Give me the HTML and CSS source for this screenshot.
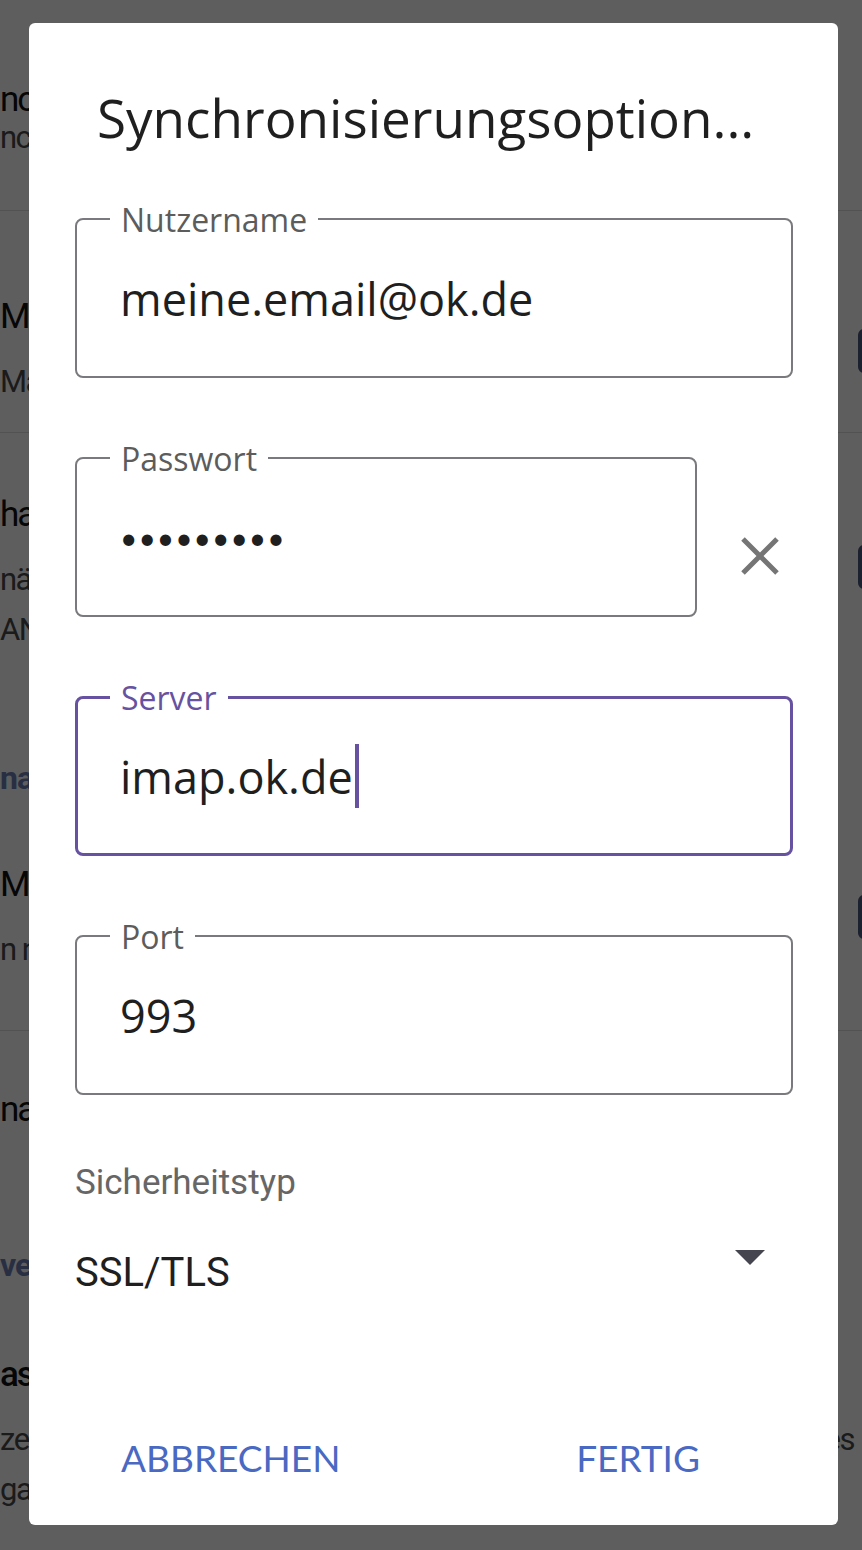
FILE: index.html
```html
<!DOCTYPE html>
<html lang="de">
<head>
	<meta charset="UTF-8">
	<title>Synchronisierungsoptionen</title>
	<link rel="stylesheet" href="styles.css">
</head>
<body>
	<div id="screen">
		<!-- settings page behind the dialog -->
		<div id="settings">
			<div class="item item-first">
				<div class="item-text">
					<div class="item-title">ncronisierung aktivieren</div>
					<div class="item-sub sub-tight">nchronisiert E-Mails</div>
				</div>
			</div>
			<div class="item item-second">
				<div class="item-text">
					<div class="item-title">Mails automatisch abrufen</div>
					<div class="item-sub">Mails im Hintergrund laden</div>
				</div>
				<div class="check"></div>
			</div>
			<div class="item item-third no-line">
				<div class="item-text">
					<div class="item-title">ha Anhänge laden</div>
					<div class="item-sub">nächste Synchronisation</div>
					<div class="item-sub">ANhänge nur über WLAN</div>
				</div>
				<div class="check"></div>
			</div>
			<div class="header header-first">nachrichten</div>
			<div class="item item-fourth">
				<div class="item-text">
					<div class="item-title">Mail benachrichtigen</div>
					<div class="item-sub">n neuen Nachrichten</div>
				</div>
				<div class="check"></div>
			</div>
			<div class="item item-fifth no-line">
				<div class="item-text">
					<div class="item-title">name des Kontos</div>
				</div>
			</div>
			<div class="header header-second">verwaltung</div>
			<div class="item item-sixth no-line">
				<div class="item-text">
					<div class="item-title title-bold">ast entfernen</div>
					<div class="item-sub sub-split"><span>ze</span><span>es</span></div>
					<div class="item-sub">ga</div>
				</div>
			</div>
		</div>
		<div id="scrim"></div>

		<div id="dialog">
			<div class="d-title">Synchronisierungsoption...</div>

			<div class="field">
				<span class="f-label">Nutzername</span>
				<span class="f-value">meine.email@ok.de</span>
			</div>

			<div class="field-row">
				<div class="field field-short">
					<span class="f-label">Passwort</span>
					<span class="f-value dots">&bull;&bull;&bull;&bull;&bull;&bull;&bull;&bull;&bull;</span>
				</div>
				<div class="clear-btn">
					<svg width="40" height="40" viewBox="0 0 40 40">
						<path d="M3 3 L37 37 M37 3 L3 37" stroke="#757575" stroke-width="5" fill="none"/>
					</svg>
				</div>
			</div>

			<div class="field focused">
				<span class="f-label">Server</span>
				<span class="f-value">imap.ok.de</span><span class="cursor"></span>
			</div>

			<div class="field">
				<span class="f-label">Port</span>
				<span class="f-value">993</span>
			</div>

			<div class="s-label">Sicherheitstyp</div>
			<div class="s-row">
				<span class="s-value">SSL/TLS</span>
				<svg class="s-arrow" width="30" height="15" viewBox="0 0 30 15">
					<path d="M0 0 L30 0 L15 15 Z" fill="#45454f"/>
				</svg>
			</div>

			<div class="d-buttons">
				<div class="d-btn">ABBRECHEN</div>
				<div class="d-btn">FERTIG</div>
			</div>
		</div>
	</div>
</body>
</html>
```

FILE: styles.css
```css
body {
	margin: 0;
	font-family: "Open Sans", "Roboto", sans-serif;
}
#screen {
	position: relative;
	width: 862px;
	height: 1550px;
	overflow: hidden;
	background-color: white;
}

/* background settings list */
#settings {
	font-family: "Roboto", sans-serif;
	color: #111;
}
.item {
	display: flex;
	justify-content: space-between;
	align-items: center;
	box-sizing: border-box;
	border-bottom: 1px solid #dddddd;
}
.no-line {
	border-bottom: none;
}
.item-text {
	flex: 1;
}
.item-title {
	font-size: 35px;
	line-height: 44px;
	letter-spacing: -2px;
	white-space: nowrap;
}
.title-bold {
	font-weight: 500;
}
.item-sub {
	font-size: 31px;
	line-height: 50px;
	letter-spacing: -1.5px;
	color: #4a4a4a;
	white-space: nowrap;
}
.item-title + .item-sub {
	margin-top: 18px;
}
.item-title + .sub-tight {
	margin-top: 0;
	line-height: 32px;
}
.sub-split {
	display: flex;
	justify-content: space-between;
	padding-right: 8px;
}
.check {
	width: 44px;
	height: 44px;
	margin-right: -40px;
	border-radius: 6px;
	background-color: #4d5a80;
}
.item-first { height: 211px; padding-top: 78px; align-items: flex-start; }
.item-second { height: 222px; padding-top: 59px; }
.item-third { height: 267px; padding-top: 60px; align-items: flex-start; }
.item-third .check { margin-top: 52px; }
.item-fourth { height: 231px; padding-top: 63px; align-items: flex-start; }
.item-fourth .check { margin-top: 32px; }
.item-fifth { height: 170px; padding-top: 57px; align-items: flex-start; }
.header {
	font-size: 32px;
	line-height: 44px;
	font-weight: 700;
	letter-spacing: -1px;
	color: #6f7fb5;
}
.header-first { margin-top: 56px; height: 44px; }
.header-second { margin-top: 42px; height: 44px; }
.item-sixth { padding-top: 66px; align-items: flex-start; }

#scrim {
	position: absolute;
	top: 0;
	left: 0;
	right: 0;
	bottom: 0;
	background-color: rgba(0, 0, 0, 0.63);
}

/* dialog */
#dialog {
	position: absolute;
	left: 29px;
	top: 23px;
	width: 809px;
	height: 1502px;
	box-sizing: border-box;
	padding: 63px 45px 42px 46px;
	border-radius: 6px;
	background-color: white;
	display: flex;
	flex-direction: column;
}
.d-title {
	font-size: 53px;
	line-height: 64px;
	color: #1f1f1f;
	padding-left: 22px;
	margin-bottom: 68px;
	white-space: nowrap;
}
.field {
	position: relative;
	height: 160px;
	box-sizing: border-box;
	border: 2px solid #7a7a7e;
	border-radius: 8px;
	padding-left: 43px;
	display: flex;
	align-items: center;
}
.field + .field,
.field-row + .field,
.field + .field-row {
	margin-top: 79px;
}
.f-label {
	position: absolute;
	top: -20px;
	left: 33px;
	padding: 0 11px;
	background-color: white;
	font-size: 32px;
	line-height: 40px;
	color: #5c5c5c;
}
.f-value {
	font-size: 45px;
	color: #1f1f1f;
}
.dots {
	font-family: "Lato", sans-serif;
	font-size: 30px;
	letter-spacing: 1px;
}
.field-row {
	display: flex;
	align-items: center;
}
.field-short {
	width: 622px;
}
.clear-btn {
	flex: 1;
	display: flex;
	justify-content: flex-end;
	padding-right: 13px;
	padding-top: 38px;
}
.focused {
	border: 3px solid #6652a0;
	padding-left: 42px;
}
.focused .f-label {
	top: -21px;
	left: 32px;
	color: #6652a0;
}
.cursor {
	width: 4px;
	height: 64px;
	margin-left: 2px;
	background-color: #6652a0;
}
.s-label {
	margin-top: 68px;
	font-family: "Roboto", sans-serif;
	font-size: 35px;
	line-height: 40px;
	color: #666;
}
.s-row {
	margin-top: 45px;
	display: flex;
	justify-content: space-between;
	align-items: flex-start;
	padding-right: 28px;
}
.s-value {
	font-family: "Roboto", sans-serif;
	font-size: 40px;
	line-height: 50px;
	color: #1f1f1f;
}
.s-arrow {
	margin-top: 2px;
}
.d-buttons {
	margin-top: auto;
	display: flex;
	justify-content: space-between;
	padding-left: 46px;
	padding-right: 93px;
}
.d-btn {
	font-family: "Lato", sans-serif;
	font-size: 37px;
	line-height: 50px;
	color: #4a69c2;
}
```
